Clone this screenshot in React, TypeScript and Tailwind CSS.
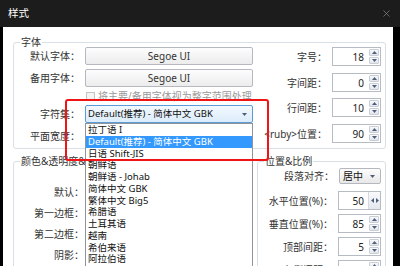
import { X } from "lucide-react";

const fontCls = "font-['Noto_Sans','Noto_Sans_CJK_SC',sans-serif]";

function Tri({ dir }: { dir: "up" | "down" | "left" | "right" }) {
  const pts = {
    up: "0,3 2.5,0 5,3",
    down: "0,0 5,0 2.5,3",
    left: "3,0 3,5 0,2.5",
    right: "0,0 0,5 3,2.5",
  }[dir];
  const vertical = dir === "up" || dir === "down";
  return (
    <svg width={vertical ? 5 : 3} height={vertical ? 3 : 5} viewBox={vertical ? "0 0 5 3" : "0 0 3 5"}>
      <polygon points={pts} fill="#4e5f7c" />
    </svg>
  );
}

function SpinBox({ value, width, horizontal }: { value: string; width: string; horizontal?: boolean }) {
  return (
    <div className={`flex h-[19px] border border-[#b7bcc4] bg-white ${width}`}>
      <span className="flex-1 self-center pr-[4px] text-right text-[10px] leading-none text-[#222]">{value}</span>
      {horizontal ? (
        <div className="flex w-[12px] items-center justify-center gap-[2px] border-l border-[#d5d9df] bg-gradient-to-b from-[#f8f9fb] to-[#e4e8ee]">
          <Tri dir="left" />
          <Tri dir="right" />
        </div>
      ) : (
        <div className="flex w-[12px] flex-col gap-[1px] p-[1px]">
          <div className="flex flex-1 items-center justify-center rounded-[1px] border border-[#c9ced6] bg-gradient-to-b from-[#f8f9fb] to-[#e2e6ec]">
            <Tri dir="up" />
          </div>
          <div className="flex flex-1 items-center justify-center rounded-[1px] border border-[#c9ced6] bg-gradient-to-b from-[#f8f9fb] to-[#e2e6ec]">
            <Tri dir="down" />
          </div>
        </div>
      )}
    </div>
  );
}

function Group({ title, className, children }: { title: string; className: string; children?: React.ReactNode }) {
  return (
    <div className={`relative rounded-[3px] border border-[#d9dfe6] ${className}`}>
      <span className="absolute -top-[7px] left-[6px] bg-white px-[1px] text-[10px] leading-[12px] text-[#333]">{title}</span>
      {children}
    </div>
  );
}

const charsets = [
  "拉丁语 I",
  "Default(推荐) - 简体中文 GBK",
  "日语 Shift-JIS",
  "朝鲜语",
  "朝鲜语 - Johab",
  "简体中文 GBK",
  "繁体中文 Big5",
  "希腊语",
  "土耳其语",
  "越南",
  "希伯来语",
  "阿拉伯语",
];

export default function App() {
  return (
    <div className={`relative flex h-[266px] w-[400px] flex-col overflow-hidden bg-black ${fontCls}`}>
      {/* title bar */}
      <div className="flex h-[27px] shrink-0 items-center justify-between bg-[#1c1c1c] pl-[8px] pr-[8px]">
        <span className="text-[10.5px] leading-none text-white">样式</span>
        <X size={11} strokeWidth={1.5} className="text-[#8a8a8a]" />
      </div>

      <div className="ml-[3px] mr-[7px] flex-1 bg-white pl-[10px] pr-[7px] pt-[15px] text-[#333]">
        {/* 字体 */}
        <Group title="字体" className="flex h-[107px] pt-[4px]">
          <div className="flex w-[240px] flex-col">
            <div className="flex h-[18px] items-center">
              <span className="w-[66px] text-right text-[10px] leading-none">默认字体：</span>
              <div className="ml-[5px] flex h-[18px] w-[168px] items-center justify-center rounded-[2px] border border-[#b5b9bf] bg-gradient-to-b from-[#fdfdfd] to-[#ececec] text-[10px] leading-none">
                Segoe UI
              </div>
            </div>
            <div className="mt-[4px] flex h-[18px] items-center">
              <span className="w-[66px] text-right text-[10px] leading-none">备用字体：</span>
              <div className="ml-[5px] flex h-[18px] w-[168px] items-center justify-center rounded-[2px] border border-[#b5b9bf] bg-gradient-to-b from-[#fdfdfd] to-[#ececec] text-[10px] leading-none">
                Segoe UI
              </div>
            </div>
            <div className="flex h-[18px] items-center pl-[72px]">
              <span className="h-[9px] w-[9px] border border-[#c4c4c4] bg-[#f4f4f4]" />
              <span className="ml-[3px] whitespace-nowrap text-[10px] leading-none text-[#9a9a9a]">将主要/备用字体视为整字范围处理</span>
            </div>
            <div className="flex h-[18px] items-center">
              <span className="w-[66px] text-right text-[10px] leading-none">字符集：</span>
              <div className="ml-[5px] flex h-[18px] w-[168px] items-center justify-between rounded-[2px] border border-[#5b9bd8] bg-gradient-to-b from-[#f3f9fe] to-[#dcecfb] pl-[2px] pr-[5px] text-[9.5px] leading-none text-[#111]">
                <span className="whitespace-nowrap">Default(推荐) - 简体中文 GBK</span>
                <Tri dir="down" />
              </div>
            </div>
            <div className="mt-[4px] flex h-[18px] items-center">
              <span className="w-[66px] text-right text-[10px] leading-none">平面宽度：</span>
              <div className="ml-[5px] h-[18px] w-[168px] border border-[#b5b9bf]" />
            </div>
          </div>
          <div className="ml-auto mr-[4px] flex flex-col items-end">
            <div className="flex items-center">
              <span className="text-[10px] leading-none">字号：</span>
              <SpinBox value="18" width="w-[49px] ml-[5px]" />
            </div>
            <div className="mt-[7px] flex items-center">
              <span className="text-[10px] leading-none">字间距：</span>
              <SpinBox value="0" width="w-[49px] ml-[5px]" />
            </div>
            <div className="mt-[6px] flex items-center">
              <span className="text-[10px] leading-none">行间距：</span>
              <SpinBox value="10" width="w-[49px] ml-[5px]" />
            </div>
            <div className="mt-[7px] flex items-center">
              <span className="text-[10px] leading-none">&lt;ruby&gt;位置：</span>
              <SpinBox value="90" width="w-[49px] ml-[5px]" />
            </div>
          </div>
        </Group>

        <div className="mt-[12px] flex gap-[6px]">
          {/* 颜色&透明度 */}
          <Group title="颜色&透明度&边框" className="h-[120px] w-[238px] pt-[25px]">
            <div className="flex w-[70px] flex-col items-end gap-[11px] text-[10px] leading-none">
              <span>默认：</span>
              <span>第一边框：</span>
              <span>第二边框：</span>
              <span>阴影：</span>
            </div>
          </Group>

          {/* 位置&比例 */}
          <Group title="位置&比例" className="h-[120px] flex-1 pt-[6px]">
            <div className="mr-[4px] flex flex-col items-end">
              <div className="flex items-center">
                <span className="text-[10px] leading-none">段落对齐：</span>
                <div className="ml-[5px] flex h-[16px] w-[42px] items-center justify-between rounded-[2px] border border-[#b5b9bf] bg-gradient-to-b from-[#fdfdfd] to-[#e8e8e8] pl-[3px] pr-[5px] text-[10px] leading-none text-[#111]">
                  <span>居中</span>
                  <Tri dir="down" />
                </div>
              </div>
              <div className="mt-[7px] flex items-center">
                <span className="text-[10px] leading-none">水平位置(%)：</span>
                <SpinBox value="50" width="w-[43px] ml-[5px]" horizontal />
              </div>
              <div className="mt-[4px] flex items-center">
                <span className="text-[10px] leading-none">垂直位置(%)：</span>
                <SpinBox value="85" width="w-[43px] ml-[5px]" />
              </div>
              <div className="mt-[4px] flex items-center">
                <span className="text-[10px] leading-none">顶部间距：</span>
                <SpinBox value="5" width="w-[43px] ml-[5px]" />
              </div>
              <div className="mt-[4px] flex items-center">
                <span className="text-[10px] leading-none">左侧间距：</span>
                <SpinBox value="5" width="w-[43px] ml-[5px]" />
              </div>
            </div>
          </Group>
        </div>
      </div>

      {/* open dropdown list */}
      <div className="absolute left-[85px] top-[123px] h-[160px] w-[168px] border border-[#8f949b] bg-white py-[0px]">
        {charsets.map((c, i) => (
          <div
            key={c}
            className={`flex h-[11.75px] items-center whitespace-nowrap pl-[2px] text-[9.5px] leading-none ${
              i === 1 ? "bg-[#3399ff] text-white" : "text-[#111]"
            }`}
          >
            {c}
          </div>
        ))}
      </div>

      {/* red annotation box */}
      <div className="absolute left-[65px] top-[99px] h-[62px] w-[204px] rounded-[3px] border-[2.5px] border-[#f01414]" />
    </div>
  );
}
